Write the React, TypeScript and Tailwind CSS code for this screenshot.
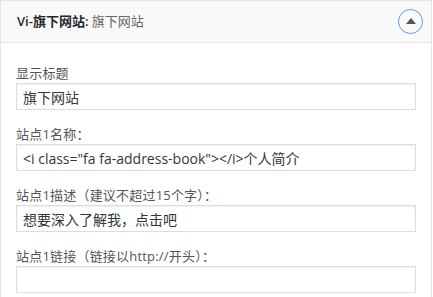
import React from 'react';

const fields = [
  { label: '显示标题', value: '旗下网站' },
  { label: '站点1名称：', value: '<i class="fa fa-address-book"></i>个人简介' },
  { label: '站点1描述（建议不超过15个字）：', value: '想要深入了解我，点击吧' },
  { label: '站点1链接（链接以http://开头）：', value: '' },
];

export default function App() {
  return (
    <div
      className="w-[433px] h-[297px] overflow-hidden bg-white"
      style={{ fontFamily: '"Open Sans", "Noto Sans CJK SC", sans-serif' }}
    >
      <div className="w-[432px] border border-[#e5e5e5] border-b-0 h-[320px] bg-white">
        {/* Header */}
        <div className="h-[42px] flex items-center justify-between bg-[#f9f9f9] border-b border-[#e5e5e5] pl-[16px] pr-[8px]">
          <h3 className="text-[13px] text-[#23282d]">
            <span className="font-semibold">Vi-旗下网站:</span>
            <span className="text-[#666]"> 旗下网站</span>
          </h3>
          <button className="w-[25px] h-[25px] rounded-full border-[1.5px] border-[#5b9dd9] flex items-center justify-center">
            <span className="w-0 h-0 border-l-[5px] border-r-[5px] border-b-[6px] border-l-transparent border-r-transparent border-b-[#555] mb-[1px]" />
          </button>
        </div>

        {/* Body */}
        <div className="px-[15px] pt-[21px] flex flex-col gap-[15px]">
          {fields.map((f) => (
            <div key={f.label} className="flex flex-col">
              <label className="text-[13px] leading-[18px] text-[#555] mb-[1px] tracking-[0.2px]">{f.label}</label>
              <input
                readOnly
                value={f.value}
                className="w-[400px] h-[27px] border border-[#ddd] px-[6px] text-[14px] text-[#32373c] bg-white shadow-[inset_0_1px_2px_rgba(0,0,0,0.07)] outline-none"
              />
            </div>
          ))}
        </div>
      </div>
    </div>
  );
}
